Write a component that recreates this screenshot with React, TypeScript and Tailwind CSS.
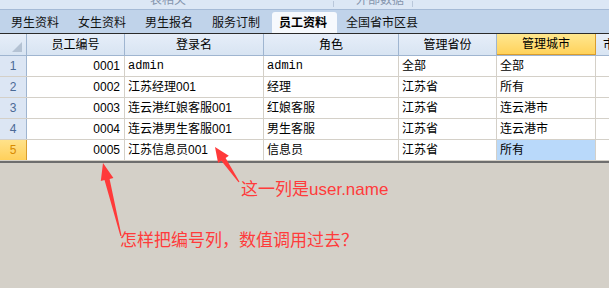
import React from 'react';

const FONT = { fontFamily: '"Liberation Sans", "Noto Sans CJK SC", sans-serif' };

const tabs = ['男生资料', '女生资料', '男生报名', '服务订制', '员工资料', '全国省市区县'];

const cols = [
    { title: '员工编号', w: 'w-[98px]' },
    { title: '登录名', w: 'w-[139px]' },
    { title: '角色', w: 'w-[135px]' },
    { title: '管理省份', w: 'w-[98px]' },
    { title: '管理城市', w: 'w-[99px]' },
];

const rows = [
    ['0001', 'admin', 'admin', '全部', '全部'],
    ['0002', '江苏经理001', '经理', '江苏省', '所有'],
    ['0003', '连云港红娘客服001', '红娘客服', '江苏省', '连云港市'],
    ['0004', '连云港男生客服001', '男生客服', '江苏省', '连云港市'],
    ['0005', '江苏信息员001', '信息员', '江苏省', '所有'],
];

// tapered red arrow, tail -> tip
const arrowPoints = (tx: number, ty: number, px: number, py: number, len: number, half: number) => {
    const dx = px - tx, dy = py - ty;
    const l = Math.hypot(dx, dy);
    const ux = dx / l, uy = dy / l;
    const nx = -uy, ny = ux;
    const bx = px - ux * len, by = py - uy * len;
    const p = (x: number, y: number) => `${x.toFixed(1)},${y.toFixed(1)}`;
    return [
        p(tx + nx * 0.6, ty + ny * 0.6),
        p(bx + nx * 2.6, by + ny * 2.6),
        p(bx + nx * half, by + ny * half),
        p(px, py),
        p(bx - nx * half, by - ny * half),
        p(bx - nx * 2.6, by - ny * 2.6),
        p(tx - nx * 0.6, ty - ny * 0.6),
    ].join(' ');
};

export default function App() {
    return (
        <div className="w-[609px] h-[288px] overflow-hidden bg-[#d4d0c8] text-[12px] text-black relative" style={FONT}>
            {/* ribbon remnant */}
            <div className="h-[9px] bg-[#dce7f5] relative overflow-hidden text-[#8595ad]">
                <span className="absolute left-[150px] top-[-9px]">表相关</span>
                <span className="absolute left-[333px] top-[1px] w-px h-[6px] bg-[#b9c7da]"></span>
                <span className="absolute left-[356px] top-[-9px]">外部数据</span>
                <span className="absolute left-[412px] top-[1px] w-px h-[6px] bg-[#b9c7da]"></span>
            </div>
            <div className="h-px bg-[#a5bad6]"></div>

            {/* sheet tabs */}
            <div className="h-[24px] bg-[#c0d3ea] flex items-end pl-[4px] border-b border-[#2a2a2a]">
                {tabs.map(t => (
                    <div
                        key={t}
                        className={`h-[21px] min-w-[65px] mr-[2px] pl-[7px] pr-[6px] flex items-center whitespace-nowrap ${t === '员工资料'
                            ? 'bg-[#f6f9fd] rounded-t-[3px] font-bold'
                            : 'text-[#111]'
                            }`}
                    >
                        {t}
                    </div>
                ))}
            </div>

            {/* header row */}
            <div className="flex h-[22px] bg-gradient-to-b from-[#e6eef9] to-[#d8e4f2] border-b border-[#9fb5d0]">
                <div className="w-[27px] border-r border-[#9fb5d0] relative">
                    <div className="absolute right-[4px] bottom-[3px] w-0 h-0 border-l-[10px] border-l-transparent border-b-[10px] border-b-[#b4c2d3]"></div>
                </div>
                {cols.map(c => (
                    <div
                        key={c.title}
                        className={`${c.w} flex items-center justify-center border-r ${c.title === '管理城市'
                            ? 'bg-gradient-to-b from-[#ffe78e] to-[#ffd25a] border-[#d99d2e] border-b border-b-[#d99d2e]'
                            : 'border-[#9fb5d0]'
                            }`}
                    >
                        {c.title}
                    </div>
                ))}
                <div className="flex-1 flex items-center pl-[7px] overflow-hidden whitespace-nowrap">市区县</div>
            </div>

            {/* data rows */}
            {rows.map((r, i) => {
                const active = i === 4;
                return (
                    <div key={i} className="flex h-[21px] bg-white border-b border-[#d4d0c8]">
                        <div
                            className={`w-[27px] flex items-center justify-center border-r ${active
                                ? 'bg-gradient-to-b from-[#ffe28a] to-[#ffd05a] text-[#d88a00] border-[#d99d2e]'
                                : 'bg-[#dce6f4] text-[#4b6a96] border-[#9fb5d0]'
                                }`}
                        >
                            {i + 1}
                        </div>
                        <div className="w-[98px] flex items-center justify-end pr-[4px] border-r border-[#d4d0c8]">{r[0]}</div>
                        <div
                            className="w-[139px] flex items-center pl-[3px] border-r border-[#d4d0c8]"
                            style={r[1] === 'admin' ? { fontFamily: '"Liberation Mono", monospace' } : undefined}
                        >
                            {r[1]}
                        </div>
                        <div
                            className="w-[135px] flex items-center pl-[3px] border-r border-[#d4d0c8]"
                            style={r[2] === 'admin' ? { fontFamily: '"Liberation Mono", monospace' } : undefined}
                        >
                            {r[2]}
                        </div>
                        <div className="w-[98px] flex items-center pl-[3px] border-r border-[#d4d0c8]">{r[3]}</div>
                        <div className={`w-[99px] flex items-center pl-[3px] border-r border-[#d4d0c8] ${active ? 'bg-[#b9d9fa]' : ''}`}>{r[4]}</div>
                        <div className="flex-1"></div>
                    </div>
                );
            })}
            <div className="h-[2px] bg-[#6e6e6e]"></div>

            {/* annotations */}
            <svg className="absolute left-0 top-0" width="609" height="288">
                <polygon points={arrowPoints(121, 236, 103, 163, 17, 6.5)} fill="#ff3a3a" />
                <polygon points={arrowPoints(239, 182, 215, 147, 15, 6.5)} fill="#ff3a3a" />
            </svg>
            <div className="absolute left-[241px] top-[179px] text-[17px] text-[#ff3b3b] leading-[22px]">这一列是user.name</div>
            <div className="absolute left-[120px] top-[230px] text-[17px] text-[#ff3b3b] leading-[22px]">怎样把编号列，数值调用过去？</div>
        </div>
    );
}
